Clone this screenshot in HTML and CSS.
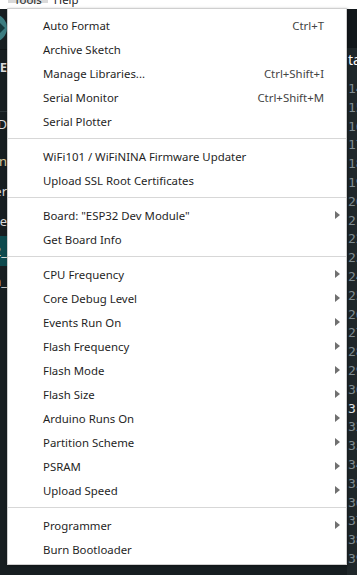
FILE: index.html
```html
<!DOCTYPE html>
<html lang="en">
<head>
  <meta charset="UTF-8">
  <meta name="viewport" content="width=device-width, initial-scale=1.0">
  <title>Arduino IDE - Tools</title>
  <link rel="stylesheet" href="styles.css">
</head>
<body>
  <!-- barra de menu de la ventana -->
  <nav class="menubar">
    <span class="menubar-item active">Tools</span>
    <span class="menubar-item">Help</span>
  </nav>

  <!-- el IDE que queda detras del menu -->
  <div class="ide">
    <aside class="side">
      <div class="toolbar">
        <span class="upload-btn"></span>
      </div>
      <div class="side-list">
        <div class="side-row title">SKETCHBOOK SIDE</div>
        <div class="side-row gap">LIBRARY MANAGER D</div>
        <div class="side-row yellow">WiFiNINA by Arduino Lin</div>
        <div class="side-row">Adafruit BME280 by Adafruit Industries er</div>
        <div class="side-row">Servo by Michael Margolis and Arduino e</div>
        <div class="side-row selected">ESP32_</div>
        <div class="side-row">sketch_jan12an_</div>
      </div>
    </aside>

    <section class="editor">
      <div class="tabs"></div>
      <div class="tab-title">tab</div>
      <div class="gutter">
        <span>14</span>
        <span>15</span><span>16</span><span>17</span><span>18</span><span>19</span>
        <span>20</span><span>21</span><span>22</span><span>23</span><span>24</span>
        <span>25</span><span>26</span><span>27</span><span>28</span><span>29</span>
        <span>30</span><span class="current">31</span><span>32</span><span>33</span><span>34</span>
        <span>35</span><span>36</span><span>37</span><span>38</span><span>39</span>
      </div>
    </section>
  </div>

  <!-- menu desplegable Tools -->
  <ul class="menu">
    <li class="menu-item"><span>Auto Format</span><span class="shortcut">Ctrl+T</span></li>
    <li class="menu-item"><span>Archive Sketch</span></li>
    <li class="menu-item"><span>Manage Libraries...</span><span class="shortcut">Ctrl+Shift+I</span></li>
    <li class="menu-item"><span>Serial Monitor</span><span class="shortcut">Ctrl+Shift+M</span></li>
    <li class="menu-item"><span>Serial Plotter</span></li>
    <li class="separator"></li>
    <li class="menu-item"><span>WiFi101 / WiFiNINA Firmware Updater</span></li>
    <li class="menu-item"><span>Upload SSL Root Certificates</span></li>
    <li class="separator"></li>
    <li class="menu-item sub"><span>Board: "ESP32 Dev Module"</span></li>
    <li class="menu-item"><span>Get Board Info</span></li>
    <li class="separator"></li>
    <li class="menu-item sub"><span>CPU Frequency</span></li>
    <li class="menu-item sub"><span>Core Debug Level</span></li>
    <li class="menu-item sub"><span>Events Run On</span></li>
    <li class="menu-item sub"><span>Flash Frequency</span></li>
    <li class="menu-item sub"><span>Flash Mode</span></li>
    <li class="menu-item sub"><span>Flash Size</span></li>
    <li class="menu-item sub"><span>Arduino Runs On</span></li>
    <li class="menu-item sub"><span>Partition Scheme</span></li>
    <li class="menu-item sub"><span>PSRAM</span></li>
    <li class="menu-item sub"><span>Upload Speed</span></li>
    <li class="separator"></li>
    <li class="menu-item sub"><span>Programmer</span></li>
    <li class="menu-item"><span>Burn Bootloader</span></li>
  </ul>
</body>
</html>
```

FILE: styles.css
```css
* {
  margin: 0;
  padding: 0;
  box-sizing: border-box;
}

body {
  font-family: "Noto Sans", "Open Sans", sans-serif;
  font-size: 12px;
  background-color: #171e21;
  color: #1f1f1f;
  overflow: hidden;
  height: 575px;
}

/* barra de menu */
.menubar {
  height: 9px;
  background-color: #ffffff;
  display: flex;
  padding-left: 8px;
  overflow: hidden;
}

.menubar-item {
  height: 9px;
  line-height: 12px;
  margin-top: -6px;
  padding: 0 6px;
  font-size: 11.4px;
  color: #1f1f1f;
}

.menubar-item.active {
  background-color: #d9d9d9;
}

/* IDE de fondo */
.ide {
  display: flex;
  height: 566px;
}

.side {
  width: 347px;
  flex-shrink: 0;
  background-color: #171e21;
  overflow: hidden;
}

.toolbar {
  height: 40px;
  position: relative;
  overflow: hidden;
}

.upload-btn {
  position: absolute;
  left: -21px;
  top: 5px;
  width: 28px;
  height: 28px;
  border-radius: 50%;
  background-color: #3b7c80;
}

.upload-btn::after {
  content: "";
  position: absolute;
  right: 2px;
  top: 8px;
  border-left: 6px solid #14393c;
  border-top: 6px solid transparent;
  border-bottom: 6px solid transparent;
}

.side-list {
  width: 7px;
  overflow: hidden;
  border-top: 1px solid #0f1416;
}

.side-row {
  display: flex;
  justify-content: flex-end;
  white-space: nowrap;
  height: 30px;
  line-height: 30px;
  color: #dadada;
  font-size: 13px;
}

.side-row.title {
  height: 62px;
  line-height: 34px;
  font-weight: bold;
  border-bottom: 1px solid #2c3538;
}

.side-row.gap {
  height: 34px;
  line-height: 24px;
}

.side-row.yellow {
  color: #d9c99a;
}

.side-row.selected {
  background-color: #0e4a4e;
  color: #e8e8e8;
}

.editor {
  flex: 1;
  background-color: #1f272a;
  overflow: hidden;
}

.tabs {
  height: 39px;
  background-color: #12181b;
}

.tab-title {
  height: 24px;
  line-height: 24px;
  padding-left: 1px;
  color: #ffffff;
  font-size: 14px;
  white-space: nowrap;
}

.gutter {
  display: flex;
  flex-direction: column;
  padding-left: 1px;
  margin-top: 8px;
  font-family: "DejaVu Sans Mono", monospace;
  font-size: 13px;
  color: #7f8c92;
}

.gutter span {
  height: 18.8px;
  line-height: 18.8px;
  white-space: nowrap;
}

.gutter .current {
  color: #dfe3e5;
}

/* menu desplegable */
.menu {
  position: absolute;
  left: 7px;
  top: 8px;
  width: 340px;
  list-style: none;
  background-color: #ffffff;
  border: 1px solid #cfcfcf;
  padding: 4px 0 3px;
  box-shadow: 1px 1px 3px rgba(0, 0, 0, 0.35);
  font-size: 11.4px;
}

.menu-item {
  display: flex;
  align-items: center;
  height: 24px;
  padding-left: 35px;
  padding-right: 22px;
  white-space: nowrap;
  color: #1f1f1f;
}

.menu-item .shortcut {
  margin-left: auto;
  color: #444;
}

.menu-item.sub {
  position: relative;
}

.menu-item.sub::after {
  content: "";
  position: absolute;
  right: 6px;
  top: 8px;
  border-left: 5px solid #707070;
  border-top: 4px solid transparent;
  border-bottom: 4px solid transparent;
}

.separator {
  height: 1px;
  background-color: #d7d7d7;
  margin: 5px 0;
}
```
